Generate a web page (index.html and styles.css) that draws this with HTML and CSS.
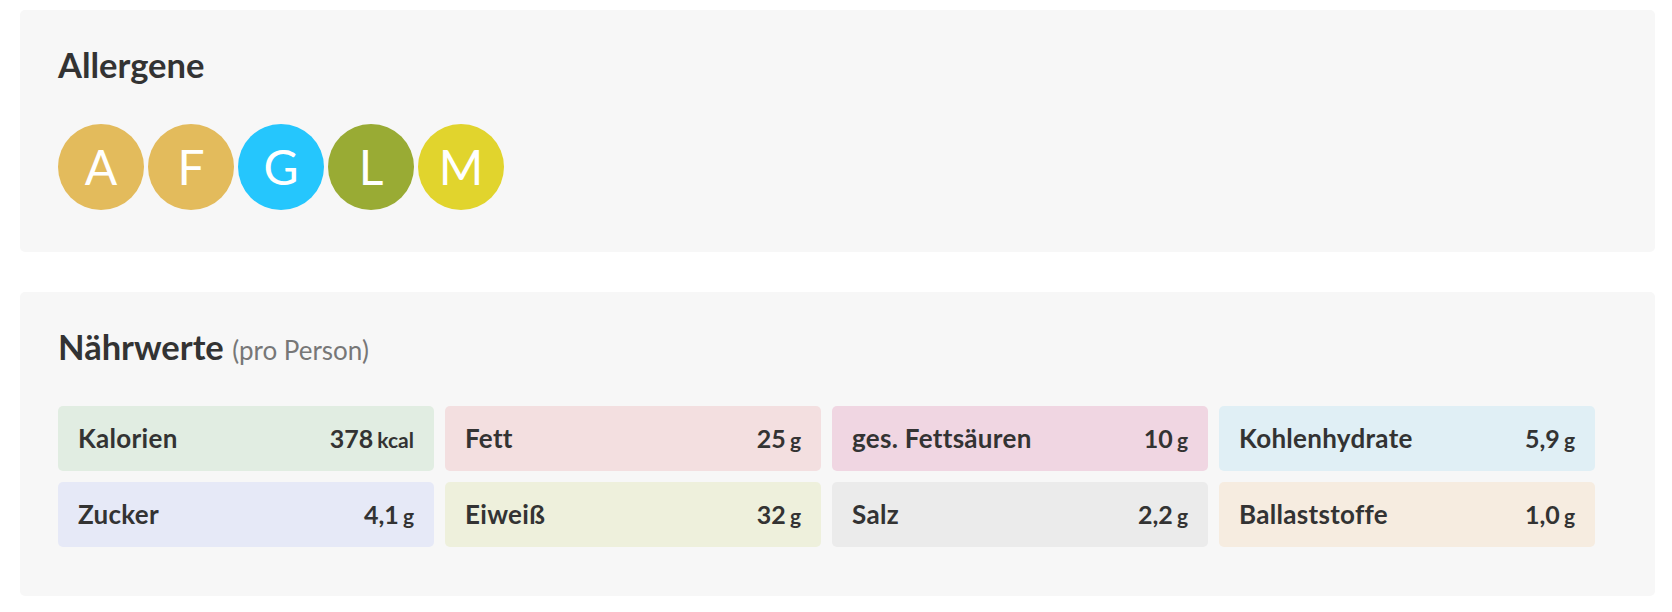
FILE: index.html
```html
<!DOCTYPE html>
<html lang="de">
<head>
<meta charset="utf-8">
<title>Allergene &amp; Nährwerte</title>
<link rel="stylesheet" href="styles.css">
</head>
<body>
<main class="page">
  <section class="card">
    <h2 class="card-title">Allergene</h2>
    <ul class="allergen-list">
      <li class="allergen allergen-gold">A</li>
      <li class="allergen allergen-gold">F</li>
      <li class="allergen allergen-cyan">G</li>
      <li class="allergen allergen-olive">L</li>
      <li class="allergen allergen-yellow">M</li>
    </ul>
  </section>

  <section class="card">
    <h2 class="card-title">Nährwerte <span class="card-subtitle">(pro Person)</span></h2>
    <div class="nutri-grid">
      <div class="nutri nutri-green"><span class="nutri-label">Kalorien</span><span class="nutri-value">378 <span class="nutri-unit">kcal</span></span></div>
      <div class="nutri nutri-rose"><span class="nutri-label">Fett</span><span class="nutri-value">25 <span class="nutri-unit">g</span></span></div>
      <div class="nutri nutri-pink"><span class="nutri-label">ges. Fettsäuren</span><span class="nutri-value">10 <span class="nutri-unit">g</span></span></div>
      <div class="nutri nutri-blue"><span class="nutri-label">Kohlenhydrate</span><span class="nutri-value">5,9 <span class="nutri-unit">g</span></span></div>
      <div class="nutri nutri-lavender"><span class="nutri-label">Zucker</span><span class="nutri-value">4,1 <span class="nutri-unit">g</span></span></div>
      <div class="nutri nutri-lime"><span class="nutri-label">Eiweiß</span><span class="nutri-value">32 <span class="nutri-unit">g</span></span></div>
      <div class="nutri nutri-gray"><span class="nutri-label">Salz</span><span class="nutri-value">2,2 <span class="nutri-unit">g</span></span></div>
      <div class="nutri nutri-beige"><span class="nutri-label">Ballaststoffe</span><span class="nutri-value">1,0 <span class="nutri-unit">g</span></span></div>
    </div>
  </section>
</main>
</body>
</html>
```

FILE: styles.css
```css
* {
  box-sizing: border-box;
}

html, body {
  margin: 0;
  padding: 0;
  background: #ffffff;
}

body {
  font-family: Lato, "Open Sans", "Liberation Sans", sans-serif;
  color: #333333;
}

.page {
  display: flex;
  flex-direction: column;
  gap: 40px;
  padding: 10px 17px 0 20px;
}

.card {
  background: #f7f7f7;
  border-radius: 5px;
  padding: 34px 38px 38px;
}

.card-title {
  margin: 0 0 38.6px;
  font-size: 34.5px;
  line-height: 1.2;
  font-weight: 700;
  color: #333333;
}

.card-subtitle {
  font-size: 26px;
  font-weight: 400;
  color: #777777;
}

.allergen-list {
  list-style: none;
  margin: 0;
  padding: 0 0 4px;
  display: flex;
  gap: 4px;
}

.allergen {
  width: 86px;
  height: 86px;
  border-radius: 50%;
  display: flex;
  align-items: center;
  justify-content: center;
  color: #ffffff;
  font-size: 48px;
  font-weight: 400;
  line-height: 1;
}

.allergen-gold { background: #e3bb5c; }
.allergen-cyan { background: #25c6fd; }
.allergen-olive { background: #99ab34; }
.allergen-yellow { background: #e1d42d; }

.nutri-grid {
  display: grid;
  grid-template-columns: repeat(4, 376px);
  gap: 11px;
  padding-bottom: 11px;
}

.nutri {
  height: 65px;
  border-radius: 5px;
  padding: 0 20px;
  display: flex;
  align-items: center;
  justify-content: space-between;
  font-size: 26px;
  font-weight: 700;
  letter-spacing: 0.3px;
  color: #333333;
}

.nutri-value {
  font-size: 25px;
  letter-spacing: 0;
  word-spacing: -2px;
}

.nutri-unit {
  font-size: 21px;
}

.nutri-green { background: #e1ede2; }
.nutri-rose { background: #f3dfe0; }
.nutri-pink { background: #f0d6e2; }
.nutri-blue { background: #e0eff5; }
.nutri-lavender { background: #e6e9f7; }
.nutri-lime { background: #eef0dc; }
.nutri-gray { background: #ebebeb; }
.nutri-beige { background: #f6ece0; }
```
